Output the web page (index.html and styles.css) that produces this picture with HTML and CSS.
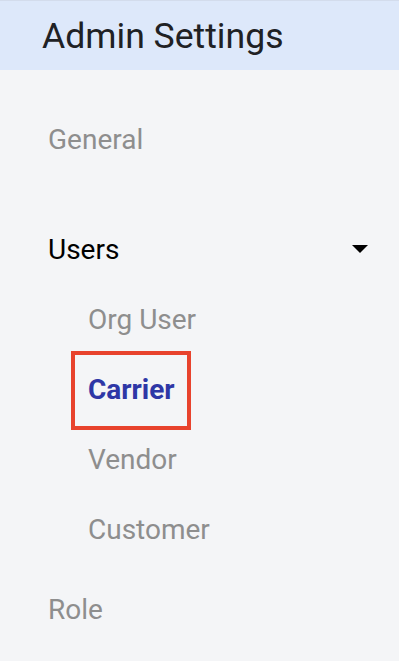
FILE: index.html
```html
<!DOCTYPE html>
<html lang="en">
<head>
<meta charset="utf-8">
<title>Admin Settings</title>
<link rel="stylesheet" href="styles.css">
</head>
<body>
<aside class="sidebar">
  <header class="sidebar-header">
    <h1 class="sidebar-title">Admin Settings</h1>
  </header>
  <nav class="nav">
    <div class="nav-item nav-item-general">General</div>
    <div class="nav-group">
      <div class="nav-item nav-item-open">
        <span>Users</span>
        <svg class="caret" width="16" height="8" viewBox="7 10 10 5" aria-hidden="true"><path d="M7 10l5 5 5-5z" fill="#000"/></svg>
      </div>
      <div class="sub-list">
        <div class="sub-item"><span class="sub-link">Org User</span></div>
        <div class="sub-item"><span class="sub-link sub-link-active">Carrier</span></div>
        <div class="sub-item"><span class="sub-link">Vendor</span></div>
        <div class="sub-item"><span class="sub-link">Customer</span></div>
      </div>
    </div>
    <div class="nav-item nav-item-role">Role</div>
  </nav>
</aside>
</body>
</html>
```

FILE: styles.css
```css
html, body {
  margin: 0;
  padding: 0;
}

body {
  background: #f4f5f7;
  font-family: Roboto, "Liberation Sans", Arial, sans-serif;
  width: 399px;
  height: 661px;
  overflow: hidden;
}

.sidebar {
  display: flex;
  flex-direction: column;
}

.sidebar-header {
  box-sizing: border-box;
  height: 70px;
  background: #dde8fa;
  border-top: 1px solid #d3dcec;
  padding: 17px 0 0 42px;
}

.sidebar-title {
  margin: 0;
  font-size: 35.6px;
  line-height: 36px;
  font-weight: 400;
  color: #202124;
}

.nav {
  display: flex;
  flex-direction: column;
  padding-top: 35px;
}

.nav-item {
  height: 70px;
  display: flex;
  align-items: center;
  padding-left: 48px;
  font-size: 28px;
  line-height: 34px;
  color: #8e8e8e;
}

.nav-item-general {
  margin-bottom: 40px;
}

.nav-item-open {
  color: #000;
  justify-content: space-between;
  padding-right: 31px;
}

.caret {
  display: block;
  margin-bottom: 3px;
}

.sub-list {
  display: flex;
  flex-direction: column;
}

.sub-item {
  height: 70px;
  display: flex;
  align-items: center;
  padding-left: 88px;
}

.sub-link {
  font-size: 28px;
  line-height: 34px;
  color: #8e8e8e;
}

.sub-link-active {
  box-sizing: border-box;
  display: flex;
  align-items: center;
  height: 79px;
  width: 120px;
  flex-shrink: 0;
  margin-left: -17px;
  padding: 0 0 0 13px;
  border: 4px solid #e8432d;
  color: #2e37a6;
  font-weight: 700;
}

.nav-item-role {
  margin-top: 10px;
}
```
